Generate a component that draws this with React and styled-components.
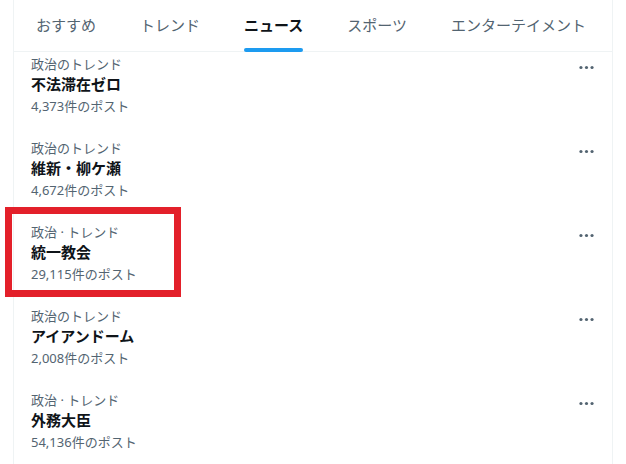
import React from "react";
import styled, { createGlobalStyle } from "styled-components";

const Global = createGlobalStyle`
  html, body { margin: 0; padding: 0; background: #ffffff; }
  body {
    font-family: "Noto Sans", "Noto Sans CJK JP", sans-serif;
    color: #0f1419;
    -webkit-font-smoothing: antialiased;
  }
`;

const Page = styled.div`
  width: 626px;
  height: 464px;
  overflow: hidden;
  background: #ffffff;
`;

const Column = styled.main`
  margin-left: 13px;
  width: 598px;
  height: 464px;
  border-left: 1px solid #eff3f4;
  border-right: 1px solid #eff3f4;
  display: flex;
  flex-direction: column;
`;

const TabBar = styled.nav`
  display: flex;
  height: 51px;
  border-bottom: 1px solid #eff3f4;
`;

const Tab = styled.div`
  position: relative;
  display: flex;
  align-items: center;
  justify-content: center;
  padding: 0 22px;
  font-size: 15px;
  line-height: 20px;
  font-weight: ${(p) => (p.$active ? 700 : 400)};
  color: ${(p) => (p.$active ? "#0f1419" : "#536471")};
  white-space: nowrap;
`;

const TabLabel = styled.span`
  position: relative;
  display: inline-flex;
  height: 100%;
  align-items: center;
  padding-bottom: 2px;
`;

const Indicator = styled.span`
  position: absolute;
  left: 0;
  right: 0;
  bottom: 0;
  height: 4px;
  border-radius: 9999px;
  background: #1d9bf0;
`;

const List = styled.section`
  display: flex;
  flex-direction: column;
  & > :first-child {
    padding-top: 4px;
  }
`;

const Item = styled.article`
  position: relative;
  display: flex;
  justify-content: space-between;
  padding: 12px 16px 14px 17px;
`;

const Body = styled.div`
  display: flex;
  flex-direction: column;
`;

const Meta = styled.div`
  font-size: 13px;
  line-height: 16px;
  color: #536471;
`;

const Title = styled.div`
  padding-top: 2px;
  font-size: 15px;
  line-height: 20px;
  font-weight: 700;
  color: #0f1419;
`;

const Count = styled.div`
  margin-top: 4px;
  font-size: 13px;
  line-height: 16px;
  color: #536471;
`;

const More = styled.svg`
  width: 19px;
  height: 19px;
  margin-top: 2px;
  fill: #536471;
  flex-shrink: 0;
`;

const Highlight = styled.div`
  position: absolute;
  left: -9px;
  top: -5px;
  width: 162px;
  height: 76px;
  border: 7px solid #e3202a;
  pointer-events: none;
`;

const tabs = ["おすすめ", "トレンド", "ニュース", "スポーツ", "エンターテイメント"];

const trends = [
  { meta: "政治のトレンド", title: "不法滞在ゼロ", count: "4,373件のポスト" },
  { meta: "政治のトレンド", title: "維新・柳ケ瀬", count: "4,672件のポスト" },
  { meta: "政治 · トレンド", title: "統一教会", count: "29,115件のポスト", marked: true },
  { meta: "政治のトレンド", title: "アイアンドーム", count: "2,008件のポスト" },
  { meta: "政治 · トレンド", title: "外務大臣", count: "54,136件のポスト" },
];

const MoreIcon = () => (
  <More viewBox="0 0 24 24" aria-hidden="true">
    <circle cx="5" cy="12" r="2" />
    <circle cx="12" cy="12" r="2" />
    <circle cx="19" cy="12" r="2" />
  </More>
);

export default function App() {
  return (
    <Page>
      <Global />
      <Column>
        <TabBar>
          {tabs.map((t) => (
            <Tab key={t} $active={t === "ニュース"}>
              <TabLabel>
                {t}
                {t === "ニュース" && <Indicator />}
              </TabLabel>
            </Tab>
          ))}
        </TabBar>
        <List>
          {trends.map((tr) => (
            <Item key={tr.title}>
              <Body>
                <Meta>{tr.meta}</Meta>
                <Title>{tr.title}</Title>
                <Count>{tr.count}</Count>
              </Body>
              <MoreIcon />
              {tr.marked && <Highlight />}
            </Item>
          ))}
        </List>
      </Column>
    </Page>
  );
}
